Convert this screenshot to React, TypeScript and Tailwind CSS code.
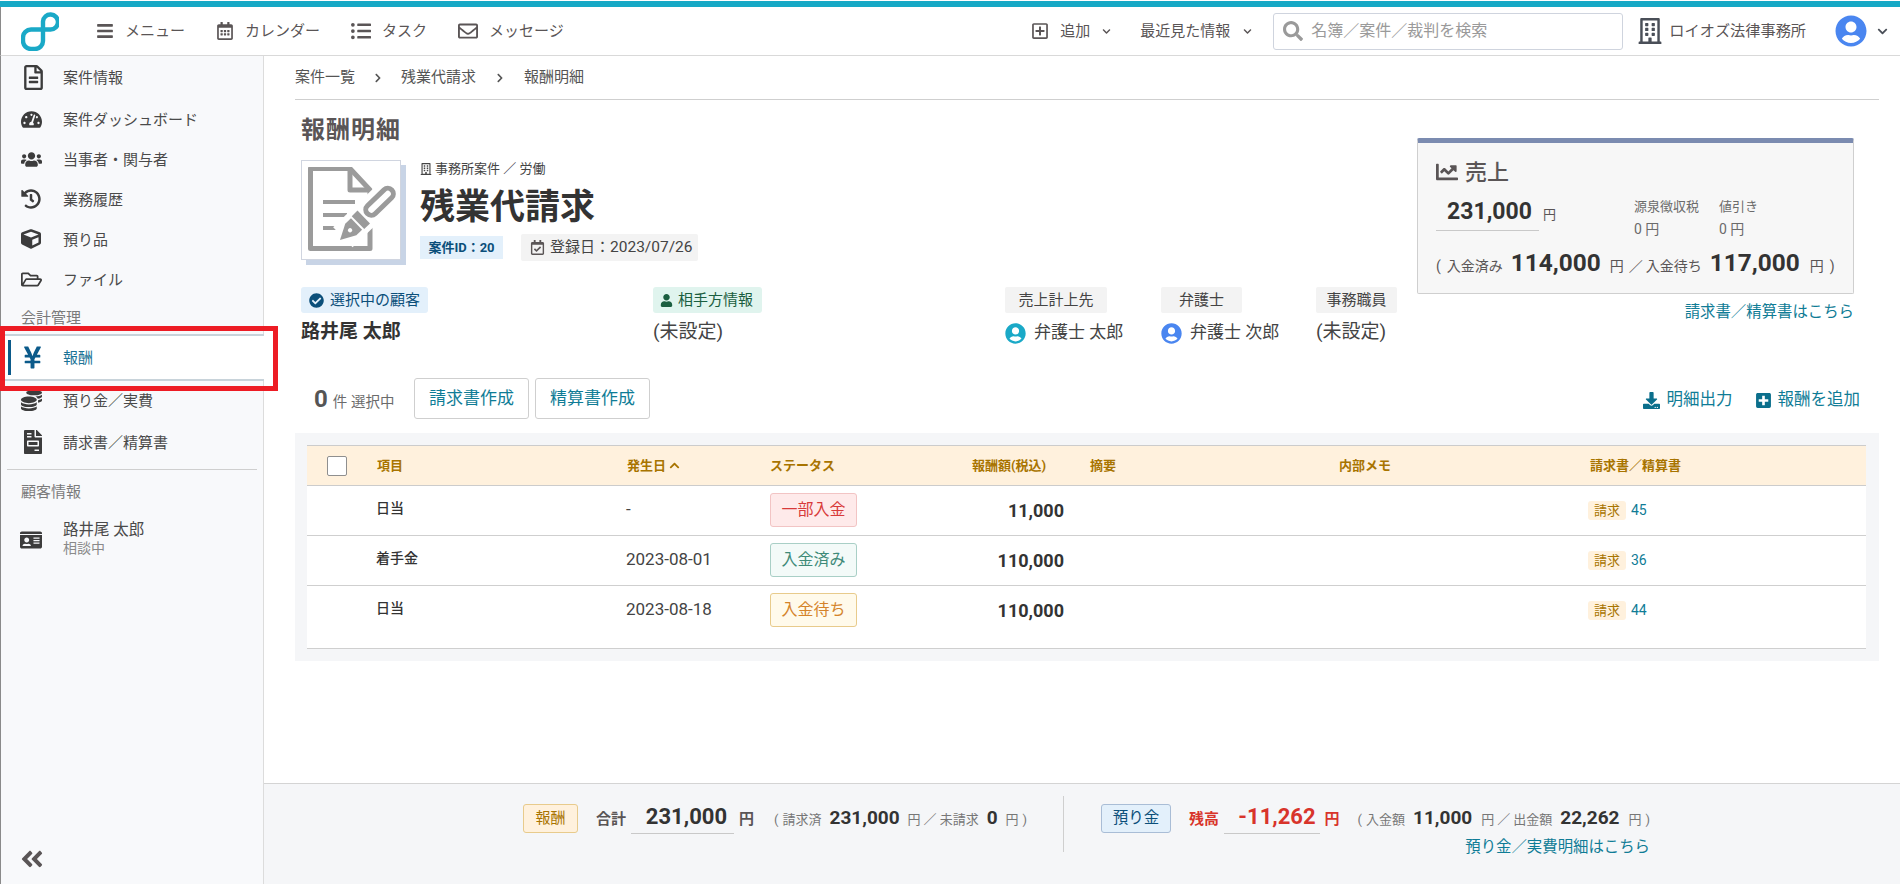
import React from "react";
import {
  FaRegFileAlt, FaTachometerAlt, FaUsers, FaHistory, FaCube, FaRegFolderOpen, FaYenSign, FaCoins, FaFileInvoice, FaIdCard,
  FaBars, FaRegCalendarAlt, FaListUl, FaRegEnvelope, FaRegPlusSquare, FaChevronDown, FaChevronUp, FaChevronRight, FaSearch,
  FaRegBuilding, FaUserCircle, FaChartLine, FaCheckCircle, FaUser, FaRegCalendarCheck, FaDownload, FaPlusSquare, FaAngleDoubleLeft,
} from "react-icons/fa";

function Logo() {
  return (
    <svg width="38" height="39" viewBox="0 0 38 39" fill="none" stroke="#1aa9c7" strokeWidth="4.4">
      <path d="M22 17.5H10a8 8 0 0 0-8 8V29a8 8 0 0 0 8 8h4a8 8 0 0 0 8-8V9.5a7.5 7.5 0 1 1 7.5 8H22" />
    </svg>
  );
}

function DocPen() {
  return (
    <svg width="88" height="86" viewBox="0 0 88 86" fill="none">
      <path d="M2.5 1.5H42L62 23V81.5H2.5Z" stroke="#9b9b9b" strokeWidth="5" strokeLinejoin="round" />
      <path d="M42 1.5V23H62" stroke="#9b9b9b" strokeWidth="5" strokeLinejoin="round" />
      <path d="M15 35H47M15 48H39M15 61H32" stroke="#9b9b9b" strokeWidth="4" />
      <g transform="translate(32 73) rotate(-44)">
        <rect x="4" y="-14" width="72" height="28" fill="#fff" />
        <path d="M0 0L15 -8H23V8H15Z" fill="#9b9b9b" />
        <circle cx="14" cy="0" r="2.2" fill="#fff" />
        <rect x="25" y="-9" width="8" height="18" fill="#9b9b9b" />
        <rect x="38" y="-5.5" width="34" height="11" rx="5.5" stroke="#9b9b9b" strokeWidth="5" />
      </g>
    </svg>
  );
}

const sideTop: [React.ReactNode, string, string][] = [
  [<FaRegFileAlt size={25} />, "案件情報", "h-[43px]"],
  [<FaTachometerAlt size={21} />, "案件ダッシュボード", "h-10"],
  [<FaUsers size={21} />, "当事者・関与者", "h-10"],
  [<FaHistory size={20} />, "業務履歴", "h-10"],
  [<FaCube size={20} />, "預り品", "h-10"],
  [<FaRegFolderOpen size={21} />, "ファイル", "h-10"],
];

function SideRow({ icon, label, h }: { icon: React.ReactNode; label: string; h: string }) {
  return (
    <div className={`flex items-center ${h} pl-5 text-[15px] text-[#4a4a4a]`}>
      <span className="w-[42px] flex items-center text-[#3c3c3c]">{icon}</span>
      <span className="pt-[2px]">{label}</span>
    </div>
  );
}

function NavItem({ icon, label, gap }: { icon: React.ReactNode; label: string; gap: string }) {
  return (
    <div className={`flex items-center ${gap} text-[#5a5556] text-[15px]`}>
      {icon}
      <span>{label}</span>
    </div>
  );
}

const rows = [
  { name: "日当", date: "-", status: "一部入金", sc: "bg-[#feeaea] border-[#f2c4c4] text-[#d83a3a]", amount: "11,000", inv: "45", h: "h-[50px]" },
  { name: "着手金", date: "2023-08-01", status: "入金済み", sc: "bg-[#f3faf8] border-[#a9cfc6] text-[#3f8a78]", amount: "110,000", inv: "36", h: "h-[50px]" },
  { name: "日当", date: "2023-08-18", status: "入金待ち", sc: "bg-[#fffaeb] border-[#e8cb8c] text-[#d4832a]", amount: "110,000", inv: "44", h: "h-[63px]" },
];

const cols = "grid grid-cols-[70px_250px_143px_184px_136px_249px_249px_278px]";

export default function App() {
  return (
    <div className="relative flex flex-col h-[884px] w-[1900px] overflow-hidden bg-white text-[#333] font-['Roboto','Noto_Sans_CJK_JP',sans-serif]">
      <div className="pt-px bg-white"><div className="h-[6px] bg-[#16a9c6]" /></div>

      {/* Top nav */}
      <header className="flex items-center h-[49px] border-b border-[#d9d9d9] border-l border-l-[#8a8a8a] shrink-0">
        <div className="ml-5 w-[75px]"><Logo /></div>
        <NavItem icon={<FaBars size={18} className="text-[#5a5556]" />} label="メニュー" gap="gap-[11px] w-[120px]" />
        <NavItem icon={<FaRegCalendarAlt size={18} className="text-[#5a5556]" />} label="カレンダー" gap="gap-[11px] w-[135px]" />
        <NavItem icon={<FaListUl size={20} className="text-[#5a5556]" />} label="タスク" gap="gap-[11px] w-[107px]" />
        <NavItem icon={<FaRegEnvelope size={20} className="text-[#5a5556]" />} label="メッセージ" gap="gap-[11px]" />
        <div className="ml-auto flex items-center text-[15px] text-[#5a5556]">
          <FaRegPlusSquare size={18} className="mr-[11px]" />
          <span>追加</span>
          <FaChevronDown size={9} className="ml-[12px] mr-[29px]" />
          <span>最近見た情報</span>
          <FaChevronDown size={9} className="ml-[13px] mr-[21px]" />
          <div className="flex items-center w-[350px] h-[37px] border border-[#cfd4de] rounded-[3px] pl-[9px]">
            <FaSearch size={20} className="text-[#9a9a9a] mr-[8px]" />
            <span className="text-[#9a9a9a] text-[16px]">名簿／案件／裁判を検索</span>
          </div>
          <FaRegBuilding size={26} className="ml-[14px] mr-[6px] text-[#4a4f58]" />
          <span className="text-[#5a5556] text-[15.2px]">ロイオズ法律事務所</span>
          <FaUserCircle size={32} className="ml-[29px] text-[#4a86f0]" />
          <FaChevronDown size={11} className="ml-[10px] mr-[12px] text-[#4a4f58]" />
        </div>
      </header>

      <div className="flex flex-1 min-h-0">
        {/* Sidebar */}
        <aside className="relative w-[264px] shrink-0 flex flex-col bg-[#f8f9fb] border-r border-[#dcdcdc] border-l border-l-[#8a8a8a]">
          {sideTop.map(([i, l, h]) => <SideRow key={l} icon={i} label={l} h={h} />)}
          <div className="h-[35px] pl-5 flex items-center pt-[4px] text-[15px] text-[#7b7b7b]">会計管理</div>
          <div className="relative -mr-px h-[47px] bg-white border-y-2 border-[#c8d3da] flex items-center text-[15px] text-[#1a7396]">
            <span className="ml-[7px] w-[3px] h-[35px] bg-[#0b5a8a]" />
            <span className="ml-[9px] w-[43px] text-[#0b5a8a]"><FaYenSign size={25} /></span>
            <span className="pt-[2px]">報酬</span>
          </div>
          <SideRow icon={<FaCoins size={21} />} label="預り金／実費" h="h-[39px]" />
          <SideRow icon={<FaFileInvoice size={24} />} label="請求書／精算書" h="h-[44px]" />
          <div className="mx-[6px] mt-[5px] border-t border-[#cfcfcf]" />
          <div className="h-[42px] pl-5 flex items-center pt-[2px] text-[15px] text-[#7b7b7b]">顧客情報</div>
          <div className="flex items-center pl-[19px] mt-[8px]">
            <FaIdCard size={22} className="text-[#3c3c3c] mr-[21px] mt-[3px]" />
            <div className="leading-[18px]">
              <div className="text-[15.5px] text-[#4a4a4a] pt-px">路井尾 太郎</div>
              <div className="text-[14px] text-[#8a8a8a]">相談中</div>
            </div>
          </div>
          <div className="mt-auto mb-[12px] ml-[18px] text-[#5a5556]"><FaAngleDoubleLeft size={26} /></div>
        </aside>

        {/* Main */}
        <main className="flex-1 min-w-0 flex flex-col">
          <div className="flex-1 min-h-0 pl-[31px] pr-[21px]">
            <div className="flex items-center h-[44px] border-b border-[#cfcfcf] text-[15px] text-[#555]">
              <span>案件一覧</span>
              <FaChevronRight size={10} className="mx-[18px]" />
              <span>残業代請求</span>
              <FaChevronRight size={10} className="mx-[19px]" />
              <span>報酬明細</span>
            </div>

            <div className="flex items-start">
              <div className="w-[1122px] pl-[6px] pt-[14px]">
                <div className="h-[30px] leading-[32px] text-[24px] font-bold text-[#5a5556] tracking-[1px]">報酬明細</div>
                <div className="flex mt-[16px]">
                  <div className="w-[100px] h-[100px] border border-[#d0d5e0] bg-white shadow-[5px_5px_0_#c8d4e6] pl-[6px] pt-[6px] shrink-0">
                    <DocPen />
                  </div>
                  <div className="ml-[19px]">
                    <div className="h-[18px] flex items-center text-[13px] text-[#444]">
                      <FaRegBuilding size={12} className="mr-[3px]" />
                      <span>事務所案件 ／ 労働</span>
                    </div>
                    <div className="mt-[2px] h-[50px] leading-[56px] text-[35px] font-bold text-[#333]">残業代請求</div>
                    <div className="mt-[4px] flex items-center gap-[18px]">
                      <span className="h-[23px] w-[83px] flex items-center justify-center bg-[#e3f0fb] text-[#0b4f7a] text-[13px] font-bold">案件ID：20</span>
                      <span className="h-[27px] w-[177px] flex items-center pl-[9px] rounded-[2px] bg-[#f3f3f3] text-[15px] text-[#444] whitespace-nowrap">
                        <FaRegCalendarCheck size={15} className="mr-[5px] text-[#5a5556] shrink-0" />
                        <span>登録日：</span>
                        <span className="text-[15.5px]">2023/07/26</span>
                      </span>
                    </div>
                  </div>
                </div>

                <div className="grid grid-cols-[352px_352px_156px_155px_auto] mt-[26px]">
                  <div>
                    <div className="flex items-center h-[26px] w-[127px] pl-[8px] rounded-[3px] bg-[#e3f0fb] text-[15px] text-[#0b4f7a]"><FaCheckCircle size={15} className="mr-[6px]" />選択中の顧客</div>
                    <div className="h-[30px] mt-[4px] flex items-center text-[19px] font-bold text-[#333]">路井尾 太郎</div>
                  </div>
                  <div>
                    <div className="flex items-center h-[26px] w-[109px] pl-[7px] rounded-[3px] bg-[#e0f4ee] text-[15px] text-[#1b5e40]"><FaUser size={13} className="mr-[5px]" />相手方情報</div>
                    <div className="h-[30px] mt-[4px] flex items-center text-[19px] text-[#444]">(未設定)</div>
                  </div>
                  <div>
                    <div className="flex items-center justify-center h-[26px] w-[102px] rounded-[2px] bg-[#f3f3f3] text-[15px] text-[#444]">売上計上先</div>
                    <div className="h-[30px] mt-[5px] flex items-center text-[17px] text-[#444]"><FaUserCircle size={21} className="mr-[8px] text-[#1aa9c7]" />弁護士 太郎</div>
                  </div>
                  <div>
                    <div className="flex items-center justify-center h-[26px] w-[81px] rounded-[2px] bg-[#f3f3f3] text-[15px] text-[#444]">弁護士</div>
                    <div className="h-[30px] mt-[5px] flex items-center text-[17px] text-[#444]"><FaUserCircle size={21} className="mr-[8px] text-[#4a86f0]" />弁護士 次郎</div>
                  </div>
                  <div>
                    <div className="flex items-center justify-center h-[26px] w-[81px] rounded-[2px] bg-[#f3f3f3] text-[15px] text-[#444]">事務職員</div>
                    <div className="h-[30px] mt-[4px] flex items-center text-[19px] text-[#444]">(未設定)</div>
                  </div>
                </div>
              </div>

              {/* Sales card */}
              <div className="w-[437px] mt-[38px]">
                <div className="h-[156px] border border-[#cfcfcf] border-t-[5px] border-t-[#7b8bb0] rounded-[2px] bg-[#f7f7f7] pl-[18px]">
                  <div className="flex items-center h-[24px] mt-[17px] text-[22px] font-medium text-[#5a5556]">
                    <FaChartLine size={22} className="mr-[7px]" />売上
                  </div>
                  <div className="flex mt-[8px]">
                    <div className="flex items-start">
                      <div className="w-[103px] h-[39px] border-b border-[#c9c9c9] text-center pl-1 text-[23px] font-bold leading-[40px] text-[#333]">231,000</div>
                      <span className="ml-[4px] mt-[13px] leading-[20px] text-[13px] text-[#5a5556]">円</span>
                    </div>
                    <div className="ml-[78px] w-[85px] pt-[5px] text-[13px] text-[#6b6b6b] leading-[20px]">
                      <div>源泉徴収税</div>
                      <div className="mt-[2px] text-[14px]">0 円</div>
                    </div>
                    <div className="pt-[5px] text-[13px] text-[#6b6b6b] leading-[20px]">
                      <div>値引き</div>
                      <div className="mt-[2px] text-[14px]">0 円</div>
                    </div>
                  </div>
                  <div className="flex items-baseline mt-[6px] text-[14px] text-[#5a5556] whitespace-nowrap">
                    <span>(</span>
                    <span className="ml-[6px]">入金済み</span>
                    <span className="ml-[8px] text-[24.4px] font-bold text-[#333]">114,000</span>
                    <span className="ml-[9px]">円</span>
                    <span className="ml-[5px]">／</span>
                    <span className="ml-[3px]">入金待ち</span>
                    <span className="ml-[8px] text-[24.4px] font-bold text-[#333]">117,000</span>
                    <span className="ml-[10px]">円</span>
                    <span className="ml-[6px]">)</span>
                  </div>
                </div>
                <div className="text-right mt-[7px] text-[15.4px] leading-[22px] text-[#0f7c96]">請求書／精算書はこちら</div>
              </div>
            </div>

            {/* Action row */}
            <div className="flex items-center h-[41px] mt-[30px]">
              <div className="pl-[19px] w-[119px] flex items-baseline text-[14.5px] text-[#6b6b6b] whitespace-nowrap">
                <span className="text-[24px] font-bold text-[#555] mr-[5px]">0</span>件 選択中
              </div>
              <button className="w-[115px] h-[41px] border border-[#cfcfcf] rounded-[3px] text-[17px] text-[#0f7c96]">請求書作成</button>
              <button className="ml-[6px] w-[115px] h-[41px] border border-[#cfcfcf] rounded-[3px] text-[17px] text-[#0f7c96]">精算書作成</button>
              <div className="ml-auto pr-[19px] pt-[3px] flex items-center text-[16.5px] text-[#0f7c96]">
                <FaDownload size={17} className="mr-[7px] text-[#0b6f8c]" />明細出力
                <FaPlusSquare size={17} className="ml-[22px] mr-[6px] text-[#0b6f8c]" />報酬を追加
              </div>
            </div>

            {/* Table */}
            <div className="mt-[14px] h-[228px] bg-[#f5f6f8] pl-[12px] pr-[13px] py-[12px]">
              <div className="bg-white">
                <div className={`${cols} h-[41px] items-center border-y border-[#cccccc] bg-[#fff1dd] text-[13px] font-bold text-[#a87400]`}>
                  <div className="pl-[20px]"><div className="w-[20px] h-[20px] bg-white border border-[#8f8f8f] rounded-[2px]" /></div>
                  <div>項目</div>
                  <div className="flex items-center gap-[3px]">発生日<FaChevronUp size={11} /></div>
                  <div>ステータス</div>
                  <div className="text-right pr-[44px] whitespace-nowrap">報酬額(税込)</div>
                  <div>摘要</div>
                  <div>内部メモ</div>
                  <div className="pl-[2px]">請求書／精算書</div>
                </div>
                {rows.map((r, i) => (
                  <div key={i} className={`${cols} ${r.h} items-start border-b border-[#cfcfcf]`}>
                    <div />
                    <div className="mt-[7px] -ml-px h-[34px] flex items-center pb-[3px] text-[14px] font-medium text-[#333]">{r.name}</div>
                    <div className="mt-[7px] -ml-px h-[34px] flex items-center text-[17px] text-[#444]">{r.date}</div>
                    <div className="mt-[7px]">
                      <div className={`w-[87px] h-[34px] flex items-center justify-center border rounded-[3px] text-[16px] ${r.sc}`}>{r.status}</div>
                    </div>
                    <div className="mt-[7px] h-[34px] flex items-center justify-end pr-[26px] text-[18px] font-bold text-[#333]">{r.amount}</div>
                    <div />
                    <div />
                    <div className="mt-[14px] flex items-center text-[14px] text-[#0f7c96]">
                      <span className="w-[38px] h-[19px] flex items-center justify-center bg-[#fff1dd] rounded-[3px] text-[13px] text-[#a87400]">請求</span>
                      <span className="ml-[5px]">{r.inv}</span>
                    </div>
                  </div>
                ))}
              </div>
            </div>
          </div>

          {/* Bottom bar */}
          <div className="h-[101px] shrink-0 border-t border-[#d4d4d4] bg-[#f5f6f8] pl-[259px] flex items-start pt-[19px] whitespace-nowrap">
            <div className="flex items-center w-[540px]">
              <span className="w-[55px] h-[29px] flex items-center justify-center border border-[#e8cb8c] rounded-[3px] bg-[#fff1dd] text-[15px] text-[#a87400]">報酬</span>
              <span className="ml-[18px] pt-[2px] text-[15px] font-bold text-[#5a5556]">合計</span>
              <span className="ml-[5px] w-[103px] h-[31px] border-b border-[#c9c9c9] text-right pr-[7px] text-[22px] font-bold leading-[28px] text-[#333]">231,000</span>
              <span className="ml-[5px] pt-[2px] text-[15px] font-bold text-[#5a5556]">円</span>
              <div className="ml-[20px] flex items-baseline text-[13px] text-[#777]">
                <span>(</span>
                <span className="ml-[4px]">請求済</span>
                <span className="ml-[8px] text-[19px] font-bold text-[#333]">231,000</span>
                <span className="ml-[8px]">円</span>
                <span className="ml-[3px]">／</span>
                <span className="ml-[3px]">未請求</span>
                <span className="ml-[8px] text-[19px] font-bold text-[#333]">0</span>
                <span className="ml-[8px]">円</span>
                <span className="ml-[4px]">)</span>
              </div>
            </div>
            <div className="w-px h-[56px] -mt-[7px] bg-[#cfcfcf]" />
            <div className="ml-[37px] w-[549px]">
              <div className="flex items-center">
                <span className="w-[72px] h-[29px] flex items-center justify-center border border-[#a9bdd6] rounded-[3px] bg-[#e3f0fb] text-[15.5px] text-[#0b4f7a]">預り金</span>
                <span className="ml-[18px] pt-[2px] text-[15px] font-bold text-[#d8342b]">残高</span>
                <span className="ml-[5px] w-[98px] h-[31px] border-b border-[#c9c9c9] text-right pr-[4px] text-[22px] font-bold leading-[28px] text-[#d8342b]">-11,262</span>
                <span className="ml-[5px] pt-[2px] text-[15px] font-bold text-[#d8342b]">円</span>
                <div className="ml-[18px] flex items-baseline text-[13px] text-[#777]">
                  <span>(</span>
                  <span className="ml-[4px]">入金額</span>
                  <span className="ml-[8px] text-[19px] font-bold text-[#333]">11,000</span>
                  <span className="ml-[9px]">円</span>
                  <span className="ml-[3px]">／</span>
                  <span className="ml-[3px]">出金額</span>
                  <span className="ml-[8px] text-[19px] font-bold text-[#333]">22,262</span>
                  <span className="ml-[9px]">円</span>
                  <span className="ml-[4px]">)</span>
                </div>
              </div>
              <div className="text-right mt-[3px] text-[15.4px] leading-[20px] text-[#0f7c96]">預り金／実費明細はこちら</div>
            </div>
          </div>
        </main>
      </div>

      {/* Red annotation frame drawn over the page */}
      <div className="absolute left-0 top-[326px] w-[278px] h-[65px] border-[5px] border-[#ed1c24]" />
    </div>
  );
}
